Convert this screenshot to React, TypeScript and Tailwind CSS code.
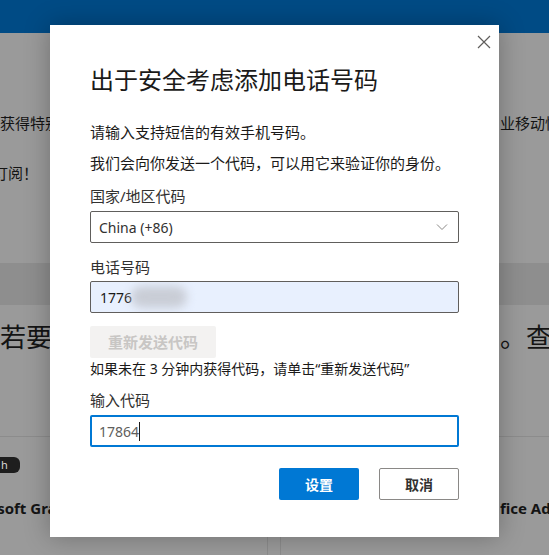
import React from 'react';

const font = "font-['Noto_Sans','Noto_Sans_CJK_SC',sans-serif]";

const Background: React.FC = () => (
  <div className="flex flex-col h-[555px] bg-[#9a9a9a] text-[#141414] overflow-hidden">
    <div className="h-[33px] bg-[#004b85] shrink-0" />
    <div className="h-[230px] flex justify-between shrink-0">
      <div className="w-[50px] overflow-hidden whitespace-nowrap pt-[78px] text-[15px]">
        <p className="leading-[24px]">获得特别优惠</p>
        <p className="leading-[24px] mt-[26px] ml-[-7px]">订阅！</p>
      </div>
      <div className="w-[49px] overflow-hidden whitespace-nowrap pt-[78px] text-[15px]">
        <p className="leading-[24px]">业移动性和安全</p>
      </div>
    </div>
    <div className="h-[42px] bg-[#8e8e8e] shrink-0" />
    <div className="h-[132px] flex justify-between border-b border-[#8c8c8c] shrink-0">
      <div className="w-[50px] overflow-hidden whitespace-nowrap pt-[15px] text-[26px] leading-[34px]">若要添加</div>
      <div className="w-[49px] overflow-hidden whitespace-nowrap pt-[15px] text-[26px] leading-[34px]">。查</div>
    </div>
    <div className="flex justify-between flex-1">
      <div className="w-[268px] border-r border-[#8c8c8c] overflow-hidden whitespace-nowrap">
        <div className="mt-[20px] ml-[-12px] w-[32px] h-[16px] rounded-md bg-[#1e1e1e] text-[#d8d8d8] text-[11px] leading-[16px] pl-[13px]">h</div>
        <p className="mt-[25px] ml-[-45px] text-[15px] font-bold leading-[20px]">Microsoft Graph</p>
      </div>
      <div className="w-[269px] border-l border-[#8c8c8c] overflow-hidden whitespace-nowrap flex justify-end">
        <p className="mt-[61px] w-[49px] overflow-hidden text-[15px] font-bold leading-[20px]">fice Add-ins</p>
      </div>
    </div>
  </div>
);

const Label: React.FC<{ children: React.ReactNode; className?: string }> = ({ children, className }) => (
  <div className={`text-[15px] leading-[20px] text-[#323130] ${className ?? ''}`}>{children}</div>
);

export default function App() {
  return (
    <div className={`relative w-[549px] h-[555px] overflow-hidden ${font}`}>
      <Background />

      <div className="absolute left-[50px] top-[25px] w-[449px] h-[512px] bg-white shadow-[0_0_24px_rgba(0,0,0,0.28)] px-[40px] pt-[39px]">
        <button className="absolute right-[8px] top-[10px] w-[14px] h-[14px] flex items-center justify-center">
          <svg width="14" height="14" viewBox="0 0 14 14" fill="none" stroke="#605e5c" strokeWidth="1.2">
            <path d="M1 1L13 13M13 1L1 13" />
          </svg>
        </button>

        <h1 className="text-[24px] leading-[32px] text-[#1b1a19] font-normal">出于安全考虑添加电话号码</h1>

        <p className="mt-[26px] text-[15px] leading-[20px] text-[#1b1a19]">请输入支持短信的有效手机号码。</p>
        <p className="mt-[11px] text-[15px] leading-[20px] text-[#1b1a19]">我们会向你发送一个代码，可以用它来验证你的身份。</p>

        <Label className="mt-[13px]">国家/地区代码</Label>
        <div className="mt-[5px] h-[32px] border border-[#605e5c] rounded-[2px] flex items-center justify-between pl-[8px] pr-[10px]">
          <span className="text-[14px] text-[#323130]">China (+86)</span>
          <svg width="12" height="8" viewBox="0 0 12 8" fill="none" stroke="#8a8886" strokeWidth="1">
            <path d="M1 1.5L6 6.5L11 1.5" />
          </svg>
        </div>

        <Label className="mt-[14px]">电话号码</Label>
        <div className="mt-[4px] h-[32px] border border-[#605e5c] rounded-[2px] bg-[#e8f0fe] flex items-center pl-[9px] relative overflow-hidden">
          <span className="text-[14px] text-[#1b1a19]">1776</span>
          <div className="absolute left-[40px] top-[4px] w-[56px] h-[22px] rounded-full bg-[#c9cdd6] blur-[5px]" />
        </div>

        <button className="mt-[13px] w-[126px] h-[32px] bg-[#f3f2f1] rounded-[2px] text-[15px] font-semibold text-[#c8c6c4]">
          重新发送代码
        </button>

        <p className="mt-[1px] text-[14px] leading-[20px] text-[#1b1a19]">如果未在 3 分钟内获得代码，请单击“重新发送代码”</p>

        <Label className="mt-[11px]">输入代码</Label>
        <div className="mt-[5px] h-[32px] border-2 border-[#0078d4] rounded-[2px] flex items-center pl-[7px]">
          <span className="text-[14px] text-[#605e5c]">17864</span>
          <span className="w-px h-[19px] bg-[#1b1a19]" />
        </div>

        <div className="mt-[21px] flex justify-end gap-[20px]">
          <button className="w-[80px] h-[32px] bg-[#0078d4] rounded-[2px] text-white text-[14px] font-semibold">设置</button>
          <button className="w-[80px] h-[32px] bg-white border border-[#8a8886] rounded-[2px] text-[#323130] text-[14px] font-semibold">取消</button>
        </div>
      </div>
    </div>
  );
}
